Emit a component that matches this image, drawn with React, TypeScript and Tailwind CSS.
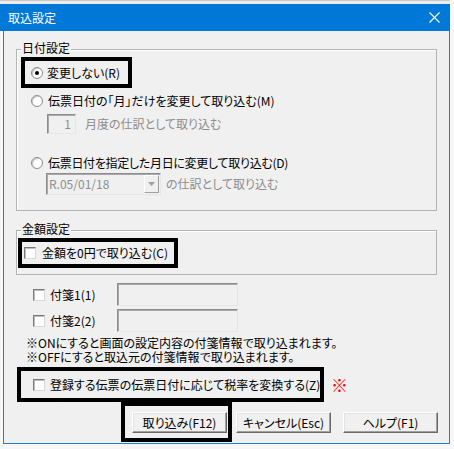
import React from "react";

function Radio({ checked = false }: { checked?: boolean }) {
  return (
    <span className="flex h-[12px] w-[12px] shrink-0 items-center justify-center rounded-full border border-[#8a8a8a] bg-white shadow-[inset_1px_1px_0_#c8c8c8]">
      {checked && <span className="h-[4px] w-[4px] rounded-full bg-black" />}
    </span>
  );
}

function Check() {
  return (
    <span className="block h-[12px] w-[12px] shrink-0 border border-t-[#7a7a7a] border-l-[#7a7a7a] border-r-[#d8d8d8] border-b-[#d8d8d8] bg-white shadow-[inset_1px_1px_0_#bdbdbd]" />
  );
}

function Group({ title, className, children }: { title: string; className: string; children?: React.ReactNode }) {
  return (
    <div className={`relative w-[421px] border border-[#b4b4b4] shadow-[inset_1px_1px_0_#ffffff] ${className}`}>
      <span className="absolute left-[4px] top-[-10px] bg-[#f0f0f0] px-[1px] leading-[16px]">{title}</span>
      {children}
    </div>
  );
}

function Button({ label, className = "" }: { label: string; className?: string }) {
  return (
    <div
      className={`flex h-[21px] w-[95px] shrink-0 items-center justify-center border border-t-white border-l-white border-r-[#696969] border-b-[#696969] bg-[#f0f0f0] shadow-[inset_-1px_-1px_0_#a0a0a0,inset_1px_1px_0_#e3e3e3] leading-[16px] ${className}`}
    >
      {label}
    </div>
  );
}

function Field({ className, children }: { className: string; children?: React.ReactNode }) {
  return (
    <div
      className={`flex shrink-0 items-center border border-t-[#8c8c8c] border-l-[#8c8c8c] border-r-[#e6e6e6] border-b-[#e6e6e6] bg-[#f0f0f0] shadow-[inset_1px_1px_0_#a9a9a9] text-[#8d8d8d] ${className}`}
    >
      {children}
    </div>
  );
}

export default function App() {
  return (
    <div className="flex h-[449px] w-[454px] flex-col overflow-hidden bg-[#f6f6f6] font-['Noto_Sans_CJK_JP',sans-serif] text-[12px] leading-[16px] text-black [font-feature-settings:'palt']">
      <div className="h-[4px] w-[450px] border-t border-[#c9c9c9] bg-[#ececec]" />
      {/* title bar */}
      <div className="flex h-[27px] w-[450px] items-center justify-between bg-[#0078d7] pl-[8px] pr-[13px] text-white">
        <span className="leading-[16px] [font-feature-settings:normal]">取込設定</span>
        <svg width="11" height="11" viewBox="0 0 11 11" className="mr-[-3px]">
          <path d="M0.5 0.5 L10.5 10.5 M10.5 0.5 L0.5 10.5" stroke="white" strokeWidth="1.1" fill="none" />
        </svg>
      </div>

      {/* dialog body */}
      <div className="ml-[3px] flex h-[413px] w-[447px] flex-col border-x border-b border-[#1a82d6] bg-[#f0f0f0] pl-[12px] pt-[18px]">
        <Group title="日付設定" className="mt-0 h-[162px]">
          <div className="flex flex-col">
            <div className="ml-[4px] mt-[7px] flex h-[31px] w-[111px] items-center gap-[4px] border-[4px] border-black pl-[6px]">
              <Radio checked />
              <span>変更しない(R)</span>
            </div>
            <div className="ml-[14px] mt-[5px] flex h-[16px] items-center gap-[5px]">
              <Radio />
              <span>伝票日付の「月」だけを変更して取り込む(M)</span>
            </div>
            <div className="ml-[30px] mt-[5px] flex h-[20px] items-center gap-[9px]">
              <Field className="h-[20px] w-[29px] justify-end pr-[4px]">1</Field>
              <span className="text-[#8d8d8d]">月度の仕訳として取り込む</span>
            </div>
            <div className="ml-[14px] mt-[21px] flex h-[16px] items-center gap-[5px]">
              <Radio />
              <span className="tracking-[-0.3px]">伝票日付を指定した月日に変更して取り込む(D)</span>
            </div>
            <div className="ml-[29px] mt-[2px] flex h-[22px] items-center gap-[5px]">
              <Field className="h-[22px] w-[115px] justify-between pl-[2px] pr-[1px]">
                <span>R.05/01/18</span>
                <span className="flex h-[18px] w-[15px] items-center justify-center border border-t-white border-l-white border-r-[#a0a0a0] border-b-[#a0a0a0] bg-[#f0f0f0]">
                  <svg width="7" height="4" viewBox="0 0 7 4">
                    <path d="M0 0 H7 L3.5 4 Z" fill="#a0a0a0" />
                  </svg>
                </span>
              </Field>
              <span className="text-[#8d8d8d]">の仕訳として取り込む</span>
            </div>
          </div>
        </Group>

        <Group title="金額設定" className="mt-[19px] h-[45px]">
          <div className="ml-[1px] mt-[7px] flex h-[30px] w-[160px] items-center gap-[6px] border-[4px] border-black pl-[2px]">
            <Check />
            <span>金額を0円で取り込む(C)</span>
          </div>
        </Group>

        {/* sticky-note options */}
        <div className="ml-[17px] mt-[8px] flex h-[23px] items-center">
          <div className="flex w-[84px] items-center gap-[5px]">
            <Check />
            <span>付箋1(1)</span>
          </div>
          <Field className="h-[23px] w-[121px]" />
        </div>
        <div className="ml-[17px] mt-[3px] flex h-[23px] items-center">
          <div className="flex w-[84px] items-center gap-[5px]">
            <Check />
            <span>付箋2(2)</span>
          </div>
          <Field className="h-[23px] w-[121px]" />
        </div>

        <p className="ml-[10px] mt-[4px] whitespace-nowrap leading-[14px]">
          ※ONにすると画面の設定内容の付箋情報で取り込まれます。
          <br />
          ※OFFにすると取込元の付箋情報で取り込まれます。
        </p>

        <div className="ml-[1px] mt-[3px] flex items-center">
          <div className="flex h-[35px] w-[307px] items-center gap-[5px] border-[4px] border-black pl-[12px]">
            <Check />
            <span className="whitespace-nowrap">登録する伝票の伝票日付に応じて税率を変換する(Z)</span>
          </div>
          <span className="ml-[7px] text-[17px] font-bold leading-[20px] text-[#ff0000]">※</span>
        </div>

        <div className="ml-[105px] flex items-start">
          <div className="h-[40px] w-[111px] border-[4px] border-black pl-[7px] pt-[6px]">
            <Button label="取り込み(F12)" />
          </div>
          <Button label="キャンセル(Esc)" className="ml-[4px] mt-[10px]" />
          <Button label="ヘルプ(F1)" className="ml-[12px] mt-[10px]" />
        </div>
      </div>
    </div>
  );
}
